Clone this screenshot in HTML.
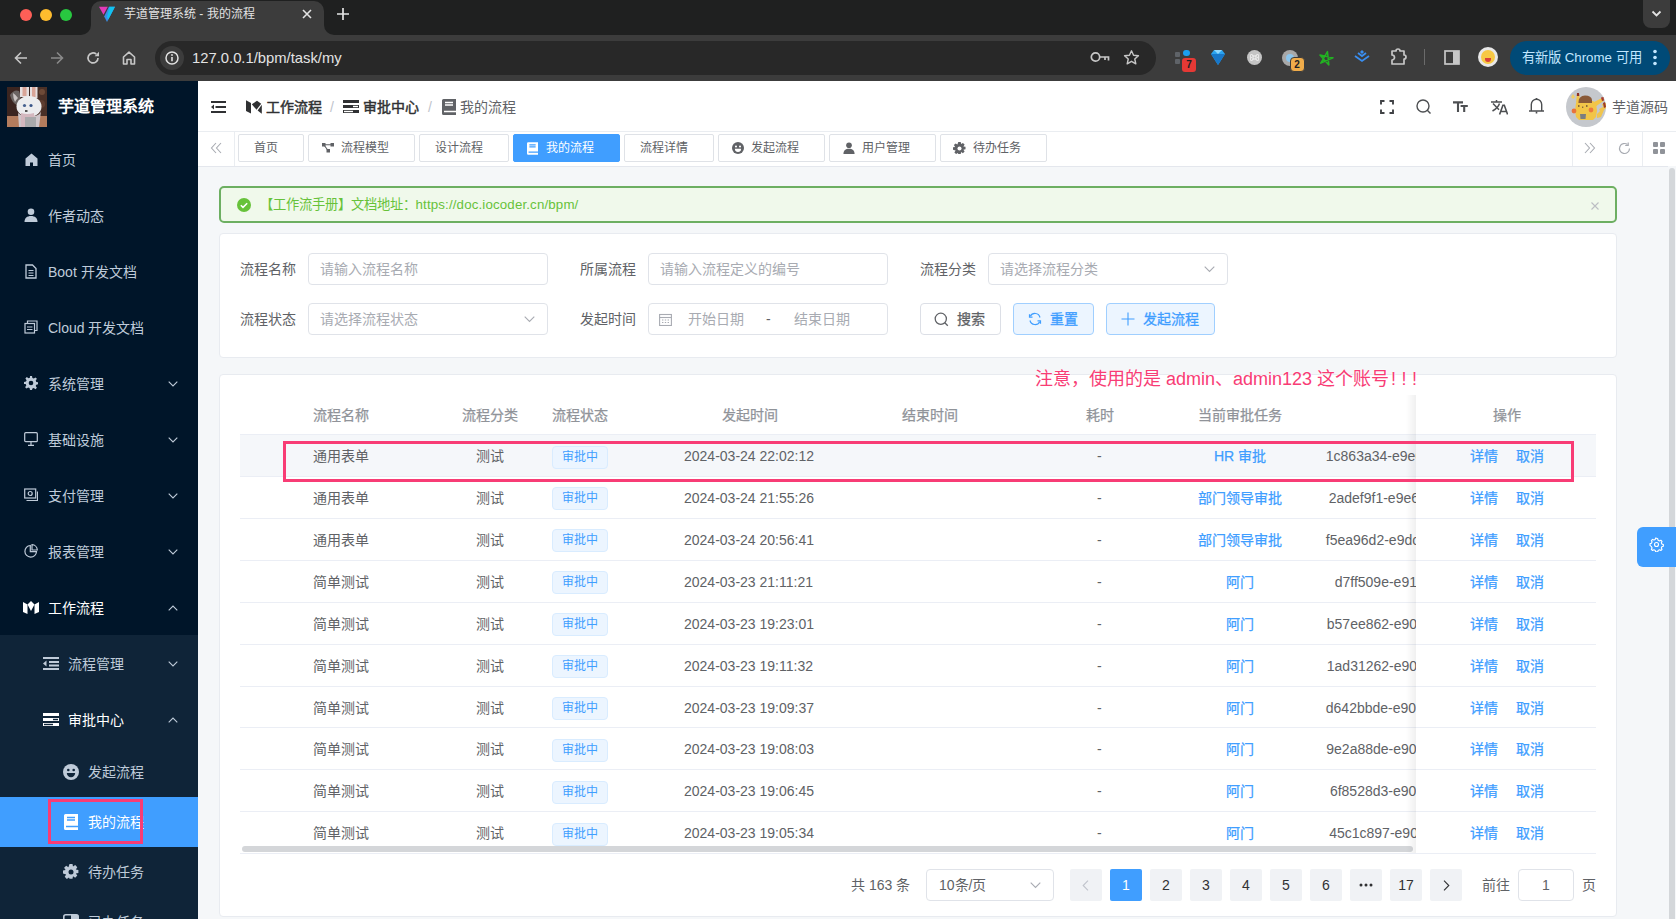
<!DOCTYPE html>
<html lang="zh-CN"><head><meta charset="utf-8">
<style>
*{box-sizing:border-box;margin:0;padding:0}
html,body{width:1676px;height:919px;overflow:hidden;font-family:"Liberation Sans",sans-serif;background:#f5f7f9}
.a{position:absolute}
svg{display:block}
/* browser chrome */
#tabbar{left:0;top:0;width:1676px;height:35px;background:#1f2020}
#toolbar{left:0;top:35px;width:1676px;height:46px;background:#3c3c3c}
/* sidebar */
#side{left:0;top:81px;width:198px;height:838px;background:#001529;overflow:hidden}
.mi{position:absolute;left:0;width:198px;height:56px;color:#bfcbd9;font-size:14px;line-height:56px}
.mi .t{position:absolute;left:48px;top:0.5px}
.mi .ic{position:absolute;top:20px}
.sub{background:#0f2438}
.chev{position:absolute;left:168px;top:26px}
/* header */
#hdr{left:198px;top:81px;width:1478px;height:50px;background:#fff}
#tags{left:198px;top:131px;width:1478px;height:36px;background:#fff;border-top:1px solid #eaedf1;border-bottom:1px solid #e4e7ed}
.tag{position:absolute;top:2px;height:28px;border:1px solid #dfe2e7;border-radius:2px;font-size:12px;color:#606266;line-height:26px;background:#fff}
.tag .t{position:absolute;top:0}
.card{position:absolute;left:219px;width:1398px;background:#fff;border:1px solid #e8ebf0;border-radius:4px}
.lbl{position:absolute;font-size:14px;color:#606266;line-height:32px;height:32px}
.inp{position:absolute;height:32px;border:1px solid #e0e3e9;border-radius:4px;background:#fff;font-size:14px;color:#a8abb2;line-height:30px}
.btn{position:absolute;height:32px;border-radius:4px;font-size:14px;line-height:30px;-webkit-text-stroke:0.3px currentColor}
.th{position:absolute;top:0;font-size:14px;color:#909399;line-height:40px;white-space:nowrap;-webkit-text-stroke:0.25px #909399}
.row{position:absolute;left:0;width:1356px;height:41.92px;border-bottom:1px solid #ebeef5}
.c{position:absolute;top:0;font-size:14px;color:#606266;line-height:42px;white-space:nowrap}
.stag{position:absolute;left:312px;top:10.5px;width:56px;height:23px;background:#ecf5ff;border:1px solid #d9ecff;border-radius:4px;color:#409eff;font-size:12px;line-height:21px;text-align:center}
.lnk{color:#409eff;-webkit-text-stroke:0.25px #409eff}
.med{-webkit-text-stroke:0.3px currentColor}
.pg{position:absolute;top:869px;width:32px;height:32px;background:#f0f2f5;border-radius:2px;font-size:14px;color:#303133;line-height:32px;text-align:center;font-weight:500}
</style></head><body>

<!-- ============ BROWSER CHROME ============ -->
<div id="tabbar" class="a"></div>
<div class="a" style="left:91px;top:1px;width:233px;height:34px;background:#3c3c3c;border-radius:10px 10px 0 0"></div>
<div class="a" style="left:81px;top:25px;width:10px;height:10px;background:#3c3c3c"></div>
<div class="a" style="left:71px;top:15px;width:20px;height:20px;background:#1f2020;border-radius:0 0 10px 0"></div>
<div class="a" style="left:324px;top:25px;width:10px;height:10px;background:#3c3c3c"></div>
<div class="a" style="left:324px;top:15px;width:20px;height:20px;background:#1f2020;border-radius:0 0 0 10px"></div>
<!-- traffic lights -->
<div class="a" style="left:20px;top:9px;width:12px;height:12px;border-radius:6px;background:#fe5f57"></div>
<div class="a" style="left:40px;top:9px;width:12px;height:12px;border-radius:6px;background:#febc2e"></div>
<div class="a" style="left:60px;top:9px;width:12px;height:12px;border-radius:6px;background:#28c840"></div>
<!-- favicon -->
<svg class="a" style="left:99px;top:6px" width="17" height="17" viewBox="0 0 17 17"><path d="M0 0.8h8.8L4.5 8.8z" fill="#e23bb8"/><path d="M9.9 0.8H16L8 16 5.2 10.5z" fill="#3a8ee8"/><path d="M10.5 0.8H16L9.3 13.5 8 11z" fill="#12c2f0"/></svg>
<div class="a" style="left:124px;top:6px;font-size:12px;color:#e3e3e3;line-height:16px;white-space:nowrap">芋道管理系统 - 我的流程</div>
<svg class="a" style="left:302px;top:9px" width="10" height="10" viewBox="0 0 10 10"><path d="M1 1l8 8M9 1l-8 8" stroke="#e3e3e3" stroke-width="1.6"/></svg>
<svg class="a" style="left:337px;top:8px" width="12" height="12" viewBox="0 0 12 12"><path d="M6 0v12M0 6h12" stroke="#e3e3e3" stroke-width="1.7"/></svg>
<div class="a" style="left:1643px;top:0;width:27px;height:28px;background:#3c3c3c;border-radius:0 0 8px 8px"></div>
<svg class="a" style="left:1651px;top:10px" width="11" height="8" viewBox="0 0 11 8"><path d="M1.5 1.5l4 4 4-4" stroke="#e3e3e3" stroke-width="1.8" fill="none"/></svg>

<div id="toolbar" class="a"></div>
<!-- nav icons -->
<svg class="a" style="left:14px;top:51px" width="14" height="14" viewBox="0 0 14 14"><path d="M13 7H2M7 1.5L1.5 7 7 12.5" stroke="#c7c7c7" stroke-width="1.6" fill="none"/></svg>
<svg class="a" style="left:50px;top:51px" width="14" height="14" viewBox="0 0 14 14"><path d="M1 7h11M7 1.5L12.5 7 7 12.5" stroke="#8a8a8a" stroke-width="1.6" fill="none"/></svg>
<svg class="a" style="left:86px;top:51px" width="14" height="14" viewBox="0 0 14 14"><path d="M12 7A5 5 0 1 1 10.3 3.2" stroke="#c7c7c7" stroke-width="1.7" fill="none"/><path d="M13 0.8v4.4H8.6z" fill="#c7c7c7"/></svg>
<svg class="a" style="left:122px;top:51px" width="14" height="14" viewBox="0 0 14 14"><path d="M1.5 13V6L7 1.2 12.5 6V13H9V8.5H5V13z" stroke="#c7c7c7" stroke-width="1.6" fill="none" stroke-linejoin="round"/></svg>
<div class="a" style="left:155px;top:41px;width:1001px;height:34px;background:#282828;border-radius:17px"></div>
<div class="a" style="left:160px;top:46px;width:24px;height:24px;background:#3c3c3c;border-radius:12px"></div>
<svg class="a" style="left:165px;top:51px" width="14" height="14" viewBox="0 0 14 14"><circle cx="7" cy="7" r="6" stroke="#e3e3e3" stroke-width="1.5" fill="none"/><path d="M7 6v4.2" stroke="#e3e3e3" stroke-width="1.6"/><circle cx="7" cy="4" r="0.9" fill="#e3e3e3"/></svg>
<div class="a" style="left:192px;top:49px;font-size:14.8px;color:#e3e3e3;line-height:18px;white-space:nowrap">127.0.0.1/bpm/task/my</div>
<svg class="a" style="left:1090px;top:51px" width="20" height="12" viewBox="0 0 20 12"><circle cx="5.5" cy="6" r="4.2" stroke="#c7c7c7" stroke-width="1.7" fill="none"/><path d="M9.7 6H18.5V9.5M15 6v3" stroke="#c7c7c7" stroke-width="1.7" fill="none"/></svg>
<svg class="a" style="left:1123px;top:49px" width="17" height="17" viewBox="0 0 24 24"><path d="M12 2.5l2.9 6.3 6.9.7-5.2 4.6 1.5 6.8L12 17.4 5.9 20.9l1.5-6.8L2.2 9.5l6.9-.7z" stroke="#c7c7c7" stroke-width="2" fill="none" stroke-linejoin="round"/></svg>
<!-- extensions -->
<div class="a" style="left:1175px;top:52px;width:5px;height:5px;background:#5f6368;border-radius:1px"></div>
<div class="a" style="left:1175px;top:59px;width:5px;height:5px;background:#5f6368;border-radius:1px"></div>
<div class="a" style="left:1183px;top:50px;width:7px;height:6px;background:#1a9ff0;border-radius:3px"></div>
<div class="a" style="left:1182px;top:58px;width:14px;height:14px;background:#e53935;border-radius:3px;color:#202124;font-size:10px;font-weight:bold;text-align:center;line-height:14px">7</div>
<svg class="a" style="left:1211px;top:50px" width="14" height="15" viewBox="0 0 14 15"><path d="M0 4L3 0h8l3 4-7 11z" fill="#2ba4f0"/><path d="M0 4h14L7 15z" fill="#1877c9"/><path d="M3 0l4 4 4-4" fill="#8fd8ff"/></svg>
<div class="a" style="left:1247px;top:50px;width:15px;height:15px;background:#c4c4c4;border-radius:8px"></div>
<svg class="a" style="left:1250px;top:53px" width="9" height="9" viewBox="0 0 9 9"><path d="M3 3h3v3H3zM3 3a1.5 1.5 0 1 0-1.5 1.5M6 3a1.5 1.5 0 1 1 1.5 1.5M3 6a1.5 1.5 0 1 1-1.5-1.5M6 6a1.5 1.5 0 1 0 1.5-1.5" stroke="#f4f4f4" stroke-width="1" fill="none"/></svg>
<div class="a" style="left:1282px;top:50px;width:16px;height:16px;background:#a8a8a8;border-radius:8px"></div>
<div class="a" style="left:1286px;top:54px;width:8px;height:8px;background:#8cc6ee;border-radius:4px"></div>
<div class="a" style="left:1289.5px;top:57px;width:15px;height:15px;background:#f0ac4a;border:1px solid #3c3c3c;border-radius:4px;color:#202124;font-size:10px;font-weight:700;font-family:'Liberation Sans',sans-serif;text-align:center;line-height:13px">2</div>
<svg class="a" style="left:1318px;top:50px" width="16" height="16" viewBox="0 0 16 16"><path d="M9.46 1.65 L10.85 14.89 L1.94 5.00 L14.96 7.77 L2.80 13.18Z" stroke="#22b322" stroke-width="1.5" fill="none" stroke-linejoin="round"/></svg>
<svg class="a" style="left:1354px;top:50px" width="16" height="14" viewBox="0 0 16 14"><path d="M1 6l7 5 7-5M4 3l4 3 4-3" stroke="#3a8ef0" stroke-width="1.8" fill="none"/><path d="M8 0l2 2-2 2-2-2z" fill="#3a8ef0"/></svg>
<svg class="a" style="left:1390px;top:48px" width="18" height="17" viewBox="0 0 18 17"><path d="M2 3h4a2 2 0 0 1 4 0h4v4a2 2 0 0 1 0 4v5H2v-4a2 2 0 0 0 0-5z" stroke="#c7c7c7" stroke-width="1.7" fill="none" stroke-linejoin="round"/></svg>
<div class="a" style="left:1424px;top:49px;width:1px;height:16px;background:#6b6b6b"></div>
<svg class="a" style="left:1444px;top:50px" width="16" height="15" viewBox="0 0 16 15"><rect x="1" y="1" width="14" height="13" stroke="#c7c7c7" stroke-width="1.7" fill="none"/><rect x="9" y="1" width="6" height="13" fill="#c7c7c7"/></svg>
<div class="a" style="left:1478px;top:47px;width:20px;height:20px;background:#e8e8e8;border-radius:10px"></div>
<div class="a" style="left:1481px;top:50px;width:14px;height:14px;background:#f7c844;border-radius:7px"></div>
<div class="a" style="left:1485px;top:58px;width:6px;height:4px;background:#d8403a;border-radius:0 0 3px 3px"></div>
<div class="a" style="left:1510px;top:41px;width:160px;height:34px;background:#004a77;border-radius:17px"></div>
<div class="a" style="left:1522px;top:49px;font-size:13.3px;color:#c2e7ff;line-height:18px;white-space:nowrap">有新版 Chrome 可用</div>
<svg class="a" style="left:1652px;top:49px" width="6" height="17" viewBox="0 0 6 17"><circle cx="3" cy="2.5" r="1.8" fill="#c2e7ff"/><circle cx="3" cy="8.5" r="1.8" fill="#c2e7ff"/><circle cx="3" cy="14.5" r="1.8" fill="#c2e7ff"/></svg>

<!-- ============ SIDEBAR ============ -->
<div id="side" class="a">
  <!-- logo -->
  <svg class="a" style="left:7px;top:6px" width="40" height="40" viewBox="0 0 40 40">
    <rect width="40" height="40" fill="#3b2520"/>
    <rect x="28" y="0" width="12" height="29" fill="#4a3027"/>
    <circle cx="35" cy="5" r="3" fill="#6e4a38"/><circle cx="34" cy="17" r="4" fill="#5e3d30"/>
    <rect y="29" width="40" height="11" fill="#b37c5d"/>
    <path d="M3 8q4-6 9-4l2 6-4 8q-5-2-7-10z" fill="#6b6462"/>
    <path d="M6 6q3 2 5 5-2 2-3 4-2-4-2-9z" fill="#c9c3c2"/>
    <path d="M13 0h9v10h-9z" fill="#e6dfe0"/><path d="M15.5 0h4v9h-4z" fill="#d9a497"/>
    <path d="M23 0h7.5v11H23z" fill="#e6dfe0"/><path d="M25 0h3.5v10H25z" fill="#d9a497"/>
    <ellipse cx="22" cy="19.5" rx="12.5" ry="10.5" fill="#ececee"/>
    <path d="M11 26q3 3 7 3h10q5-1 6-5l-2 16H12z" fill="#cfc6ca"/>
    <path d="M14 26q6 2 13 0l1 14H14z" fill="#d4b8bf"/>
    <path d="M18 30h11v10H18z" fill="#a9a9ab"/>
    <circle cx="17.5" cy="18.5" r="1.6" fill="#46618f"/><circle cx="24" cy="18.5" r="1.6" fill="#3a5688"/>
    <rect x="18" y="23" width="2.5" height="2" fill="#555"/>
  </svg>
  <div class="a" style="left:58px;top:17px;font-size:16px;color:#fff;font-weight:bold;line-height:18px;white-space:nowrap">芋道管理系统</div>

  <div class="mi" style="top:50px"><svg class="ic" style="left:25px;top:22px" width="13" height="13" viewBox="0 0 13 13"><path d="M6.5 0.5L0.5 5.5V13H5V9.5h3V13h4.5V5.5z" fill="#bfcbd9"/></svg><span class="t">首页</span></div>
  <div class="mi" style="top:106px"><svg class="ic" style="left:24px;top:21px" width="14" height="14" viewBox="0 0 14 14"><circle cx="7" cy="3.8" r="3.3" fill="#bfcbd9"/><path d="M0.5 14c0-4 2.5-6 6.5-6s6.5 2 6.5 6z" fill="#bfcbd9"/></svg><span class="t">作者动态</span></div>
  <div class="mi" style="top:162px"><svg class="ic" style="left:25px;top:21px" width="12" height="15" viewBox="0 0 12 15"><path d="M1 1h6.5L11 4.5V14H1z" stroke="#bfcbd9" stroke-width="1.3" fill="none"/><path d="M3.5 6.5h5M3.5 9h5M3.5 11.5h5" stroke="#bfcbd9" stroke-width="1.1"/></svg><span class="t">Boot 开发文档</span></div>
  <div class="mi" style="top:218px"><svg class="ic" style="left:24px;top:21px" width="14" height="14" viewBox="0 0 14 14"><path d="M3.5 3.5V1h9.5v9.5h-2.5" stroke="#bfcbd9" stroke-width="1.2" fill="none"/><rect x="1" y="3.5" width="9.5" height="9.5" stroke="#bfcbd9" stroke-width="1.2" fill="none"/><path d="M3 7h5.5M3 9.5h5.5" stroke="#bfcbd9" stroke-width="1.1"/></svg><span class="t">Cloud 开发文档</span></div>
  <div class="mi" style="top:274px"><svg class="ic" style="left:24px;top:21px" width="14" height="14" viewBox="0 0 14 14"><path d="M6 0h2l.4 2 1.4.6 1.7-1.2 1.4 1.4-1.2 1.7.6 1.4 2 .4v2l-2 .4-.6 1.4 1.2 1.7-1.4 1.4-1.7-1.2-1.4.6L8 14H6l-.4-2-1.4-.6-1.7 1.2-1.4-1.4 1.2-1.7-.6-1.4L0 8V6l2-.4.6-1.4-1.2-1.7 1.4-1.4 1.7 1.2 1.4-.6z" fill="#bfcbd9"/><circle cx="7" cy="7" r="2.3" fill="#001529"/></svg><span class="t">系统管理</span><svg class="chev" width="10" height="6" viewBox="0 0 10 6"><path d="M0.7 0.7L5 5 9.3 0.7" stroke="#bfcbd9" stroke-width="1.1" fill="none"/></svg></div>
  <div class="mi" style="top:330px"><svg class="ic" style="left:24px;top:21px" width="14" height="14" viewBox="0 0 14 14"><rect x="0.7" y="0.7" width="12.6" height="9" rx="1" stroke="#bfcbd9" stroke-width="1.2" fill="none"/><path d="M7 9.7v3.3M4 13.3h6" stroke="#bfcbd9" stroke-width="1.2"/></svg><span class="t">基础设施</span><svg class="chev" width="10" height="6" viewBox="0 0 10 6"><path d="M0.7 0.7L5 5 9.3 0.7" stroke="#bfcbd9" stroke-width="1.1" fill="none"/></svg></div>
  <div class="mi" style="top:386px"><svg class="ic" style="left:24px;top:21px" width="14" height="14" viewBox="0 0 14 14"><rect x="0.7" y="1" width="11" height="9" stroke="#bfcbd9" stroke-width="1.2" fill="none"/><path d="M2.5 12.5h11V3.5" stroke="#bfcbd9" stroke-width="1.2" fill="none"/><circle cx="6.2" cy="5.5" r="2" stroke="#bfcbd9" stroke-width="1.2" fill="none"/></svg><span class="t">支付管理</span><svg class="chev" width="10" height="6" viewBox="0 0 10 6"><path d="M0.7 0.7L5 5 9.3 0.7" stroke="#bfcbd9" stroke-width="1.1" fill="none"/></svg></div>
  <div class="mi" style="top:442px"><svg class="ic" style="left:24px;top:21px" width="14" height="14" viewBox="0 0 14 14"><path d="M6.3 1.5A5.8 5.8 0 1 0 12.5 7.7H6.3z" stroke="#bfcbd9" stroke-width="1.2" fill="none"/><path d="M8 0.7A5.5 5.5 0 0 1 13.3 6H8z" stroke="#bfcbd9" stroke-width="1.2" fill="none"/></svg><span class="t">报表管理</span><svg class="chev" width="10" height="6" viewBox="0 0 10 6"><path d="M0.7 0.7L5 5 9.3 0.7" stroke="#bfcbd9" stroke-width="1.1" fill="none"/></svg></div>
  <div class="mi" style="top:498px;color:#fff"><svg class="ic" style="left:23px;top:22px" width="16" height="13" viewBox="0 0 16 13"><path d="M0 1l4.5 2.5V13L0 11z" fill="#fff"/><path d="M4.5 3.5L8 0l3.5 3.5L8 10z" fill="#fff"/><path d="M11.5 3.5L16 1v10l-4.5 2z" fill="#fff"/></svg><span class="t">工作流程</span><svg class="chev" width="10" height="6" viewBox="0 0 10 6"><path d="M0.7 5.3L5 1 9.3 5.3" stroke="#bfcbd9" stroke-width="1.1" fill="none"/></svg></div>
  <div class="a sub" style="left:0;top:554px;width:198px;height:290px"></div>
  <div class="mi" style="top:554px"><svg class="ic" style="left:43px;top:22px" width="16" height="13" viewBox="0 0 16 13"><path d="M0 1h16M6 5h10M6 8.5h10M0 12h16" stroke="#bfcbd9" stroke-width="2.2"/><path d="M0 6.5L3.5 3.5v6z" fill="#bfcbd9"/></svg><span class="t" style="left:68px">流程管理</span><svg class="chev" width="10" height="6" viewBox="0 0 10 6"><path d="M0.7 0.7L5 5 9.3 0.7" stroke="#bfcbd9" stroke-width="1.1" fill="none"/></svg></div>
  <div class="mi" style="top:610px;color:#fff"><svg class="ic" style="left:43px;top:22px" width="16" height="13" viewBox="0 0 16 13"><rect x="0" y="0" width="16" height="3" fill="#fff"/><rect x="0" y="5" width="16" height="3" fill="#fff"/><rect x="0" y="10" width="16" height="3" fill="#fff"/><rect x="10" y="5.8" width="5" height="1.4" fill="#0f2438"/><rect x="1" y="10.8" width="9" height="1.4" fill="#0f2438"/></svg><span class="t" style="left:68px">审批中心</span><svg class="chev" width="10" height="6" viewBox="0 0 10 6"><path d="M0.7 5.3L5 1 9.3 5.3" stroke="#bfcbd9" stroke-width="1.1" fill="none"/></svg></div>
  <div class="mi" style="top:666px;height:50px;line-height:50px"><svg class="ic" style="left:63px;top:17px" width="16" height="16" viewBox="0 0 16 16"><circle cx="8" cy="8" r="8" fill="#bfcbd9"/><circle cx="5.3" cy="6" r="1.3" fill="#0f2438"/><circle cx="10.7" cy="6" r="1.3" fill="#0f2438"/><path d="M3.8 9h8.4a4.2 4.2 0 0 1-8.4 0z" fill="#0f2438"/></svg><span class="t" style="left:88px;top:-0.5px">发起流程</span></div>
  <div class="mi" style="top:716px;height:50px;line-height:50px;background:#409eff;color:#fff"><svg class="ic" style="left:64px;top:17px" width="14" height="16" viewBox="0 0 14 16"><path d="M1.5 0H14v16H1.5A1.5 1.5 0 0 1 0 14.5v-13A1.5 1.5 0 0 1 1.5 0z" fill="#fff"/><path d="M3 3.5h8M3 6h8M2 12.5h12" stroke="#409eff" stroke-width="1.4"/></svg><span class="t" style="left:88px;top:-0.5px">我的流程</span></div>
  <div class="mi" style="top:766px;height:50px;line-height:50px"><svg class="ic" style="left:63px;top:17px" width="16" height="16" viewBox="0 0 16 16"><path d="M6.5 0h3l.5 2.6 2.2-1.5 2.1 2.1-1.5 2.2 2.6.5v3l-2.6.5 1.5 2.2-2.1 2.1-2.2-1.5-.5 2.6h-3L6 13.4l-2.2 1.5-2.1-2.1 1.5-2.2L0 9.5v-3l2.6-.5-1.5-2.2 2.1-2.1L5.4 3.2z" fill="#bfcbd9"/><circle cx="8" cy="8" r="2.5" fill="#0f2438"/></svg><span class="t" style="left:88px;top:-0.5px">待办任务</span></div>
  <div class="mi" style="top:816px;height:50px;line-height:50px"><svg class="ic" style="left:63px;top:17px" width="16" height="16" viewBox="0 0 16 16"><rect x="0.8" y="0.8" width="14.4" height="14.4" rx="2" stroke="#bfcbd9" stroke-width="1.6" fill="none"/><rect x="8" y="0.8" width="7.2" height="14.4" fill="#bfcbd9"/></svg><span class="t" style="left:88px;top:-0.5px">已办任务</span></div>
  <!-- annotation box -->
  <div class="a" style="left:48px;top:718px;width:95px;height:45px;border:3px solid #f83c75"></div>
</div>

<!-- ============ HEADER ============ -->
<div id="hdr" class="a"></div>
<!-- hamburger -->
<svg class="a" style="left:211px;top:101px" width="15" height="12" viewBox="0 0 15 12"><path d="M0 1h15M4.5 6H15M0 11h15" stroke="#303133" stroke-width="1.8"/><path d="M0 6L3 3.6v4.8z" fill="#303133"/></svg>
<!-- M logo -->
<svg class="a" style="left:246px;top:99.5px" width="16" height="14" viewBox="0 0 16 14"><path d="M0 0.3L5 3V13.6L0 11z" fill="#303133"/><path d="M5.8 4.2L11 0.8 15.2 3.8 10.5 9.8z" fill="#303133"/><path d="M11.6 10.6L15.8 4.8V13.8z" fill="#303133"/></svg>
<div class="a" style="left:266px;top:98px;font-size:14px;color:#303133;-webkit-text-stroke:0.45px #303133;line-height:18px;white-space:nowrap">工作流程</div>
<div class="a" style="left:330px;top:98px;font-size:14px;color:#c0c4cc;line-height:18px">/</div>
<svg class="a" style="left:343px;top:100px" width="16" height="13" viewBox="0 0 16 13"><rect x="0" y="0" width="16" height="3" fill="#303133"/><rect x="0" y="5" width="16" height="3" fill="#303133"/><rect x="0" y="10" width="16" height="3" fill="#303133"/><rect x="10" y="5.8" width="5" height="1.4" fill="#fff"/><rect x="1" y="10.8" width="9" height="1.4" fill="#fff"/></svg>
<div class="a" style="left:363px;top:98px;font-size:14px;color:#303133;-webkit-text-stroke:0.45px #303133;line-height:18px;white-space:nowrap">审批中心</div>
<div class="a" style="left:428px;top:98px;font-size:14px;color:#c0c4cc;line-height:18px">/</div>
<svg class="a" style="left:442px;top:99px" width="14" height="16" viewBox="0 0 14 16"><path d="M1.5 0H14v16H1.5A1.5 1.5 0 0 1 0 14.5v-13A1.5 1.5 0 0 1 1.5 0z" fill="#606266"/><path d="M3 3.5h8M3 6h8M2 12.5h12" stroke="#fff" stroke-width="1.4"/></svg>
<div class="a" style="left:460px;top:98px;font-size:14px;color:#606266;line-height:18px;white-space:nowrap">我的流程</div>
<!-- right tools -->
<svg class="a" style="left:1380px;top:100px" width="14" height="14" viewBox="0 0 14 14"><path d="M1 4.5V1h3.5M9.5 1H13v3.5M13 9.5V13H9.5M4.5 13H1V9.5" stroke="#404245" stroke-width="1.9" fill="none"/></svg>
<svg class="a" style="left:1416px;top:99px" width="16" height="16" viewBox="0 0 16 16"><circle cx="7" cy="7" r="6" stroke="#4d4f52" stroke-width="1.4" fill="none"/><path d="M11.3 11.3L14.5 14.5" stroke="#4d4f52" stroke-width="1.4"/></svg>
<svg class="a" style="left:1452px;top:100px" width="17" height="14" viewBox="0 0 17 14"><path d="M1 2.4h10M6 2.4V12M8.6 6h7.2M12.2 6v6" stroke="#4d4f52" stroke-width="2.1"/></svg>
<svg class="a" style="left:1490px;top:98px" width="18" height="18" viewBox="0 0 18 18"><path d="M1 4h11M6.5 2v2M3 5.5l6 6.2M9.5 5.5c-1 3-3.5 5.5-7 7.5" stroke="#4d4f52" stroke-width="1.5" fill="none"/><path d="M9.6 16.5l3.3-9.2h1.4l3.3 9.2M11 13.5h5" stroke="#4d4f52" stroke-width="1.6" fill="none"/></svg>
<svg class="a" style="left:1528px;top:97px" width="17" height="18" viewBox="0 0 17 18"><path d="M3.3 13.8V7.5a5.2 5.2 0 0 1 10.4 0v6.3M1 14h15" stroke="#4d4f52" stroke-width="1.4" fill="none"/><path d="M8.5 2.3V1M8.5 14.5v2" stroke="#4d4f52" stroke-width="1.6"/></svg>
<!-- avatar -->
<svg class="a" style="left:1566px;top:87px" width="40" height="40" viewBox="0 0 40 40">
  <circle cx="20" cy="20" r="20" fill="#c5c8cd"/>
  <path d="M31 27l3-3-1-2 4-2-1-3 4-1v5l-2 2-3 7-4 1z" fill="#f0c54e"/>
  <path d="M37 16l2-1 1 5-2 1z" fill="#9a3a2a"/>
  <path d="M10 16l3-2h14l3 2 1 8-1 6-3 3H13l-3-3-1-6z" fill="#f2c548"/>
  <path d="M10 16l1-10h2l1 8z" fill="#f2c548"/>
  <path d="M11 6h2l.3 3h-2.5z" fill="#8e2f24"/>
  <path d="M26 16l10-5 1.5 3-8.5 6z" fill="#f2c548"/>
  <path d="M35 10.5l2.5-.5.5 3.5-2 .5z" fill="#a63a2a"/>
  <path d="M12.5 15q0-6 6.5-6.5 6.5 0 7 4.5v3h-13.5z" fill="#8a5a38"/>
  <circle cx="8" cy="24" r="2.4" fill="#e8743c"/>
  <circle cx="25" cy="23" r="2.4" fill="#ec7a3e"/>
  <rect x="12" y="18" width="1.5" height="2" fill="#8a6a3a"/><rect x="20" y="18" width="1.5" height="2" fill="#8a6a3a"/><rect x="16" y="19.5" width="1.3" height="1.5" fill="#8a6a3a"/>
  <path d="M14 27h6l-.5 5h-5z" fill="#7c7d80"/>
  <path d="M5 10l2-3 2 3-2 2z" fill="#f2cf63"/>
</svg>
<div class="a" style="left:1612px;top:98px;font-size:14px;color:#606266;line-height:18px;white-space:nowrap">芋道源码</div>


<div id="tags" class="a"></div>
<!-- tags view -->
<svg class="a" style="left:210px;top:142px" width="12" height="12" viewBox="0 0 12 12"><path d="M6 1L1.5 6 6 11M11 1L6.5 6 11 11" stroke="#a8abb2" stroke-width="1.1" fill="none"/></svg>
<div class="a" style="left:234px;top:132px;width:1px;height:34px;background:#eaedf1"></div>
<div class="tag a" style="left:238px;top:134px;width:66px"><span class="t" style="left:15px">首页</span></div>
<div class="tag a" style="left:308px;top:134px;width:107px"><svg class="a" style="left:13px;top:8px" width="12" height="10" viewBox="0 0 12 10"><rect x="0" y="0" width="3.5" height="3.5" fill="#606266"/><rect x="8.5" y="0" width="3.5" height="3.5" fill="#606266"/><rect x="4.5" y="6" width="3.5" height="3.5" fill="#606266"/><path d="M2 2l4 5.5M3 1.75h6" stroke="#606266" stroke-width="1.1"/></svg><span class="t" style="left:32px">流程模型</span></div>
<div class="tag a" style="left:419px;top:134px;width:90px"><span class="t" style="left:15px">设计流程</span></div>
<div class="tag a" style="left:513px;top:134px;width:107px;background:#409eff;border-color:#409eff;color:#fff"><svg class="a" style="left:13px;top:7px" width="11" height="13" viewBox="0 0 14 16"><path d="M1.5 0H14v16H1.5A1.5 1.5 0 0 1 0 14.5v-13A1.5 1.5 0 0 1 1.5 0z" fill="#fff"/><path d="M3 3.5h8M3 6h8M2 12.5h12" stroke="#409eff" stroke-width="1.6"/></svg><span class="t" style="left:32px">我的流程</span></div>
<div class="tag a" style="left:624px;top:134px;width:90px"><span class="t" style="left:15px">流程详情</span></div>
<div class="tag a" style="left:718px;top:134px;width:107px"><svg class="a" style="left:13px;top:7px" width="12" height="12" viewBox="0 0 16 16"><circle cx="8" cy="8" r="8" fill="#606266"/><circle cx="5.3" cy="6" r="1.4" fill="#fff"/><circle cx="10.7" cy="6" r="1.4" fill="#fff"/><path d="M3.8 9h8.4a4.2 4.2 0 0 1-8.4 0z" fill="#fff"/></svg><span class="t" style="left:32px">发起流程</span></div>
<div class="tag a" style="left:829px;top:134px;width:107px"><svg class="a" style="left:13px;top:7px" width="12" height="12" viewBox="0 0 14 14"><circle cx="7" cy="3.8" r="3.3" fill="#606266"/><path d="M0.5 14c0-4 2.5-6 6.5-6s6.5 2 6.5 6z" fill="#606266"/></svg><span class="t" style="left:32px">用户管理</span></div>
<div class="tag a" style="left:940px;top:134px;width:107px"><svg class="a" style="left:12px;top:7px" width="13" height="13" viewBox="0 0 16 16"><path d="M6.5 0h3l.5 2.6 2.2-1.5 2.1 2.1-1.5 2.2 2.6.5v3l-2.6.5 1.5 2.2-2.1 2.1-2.2-1.5-.5 2.6h-3L6 13.4l-2.2 1.5-2.1-2.1 1.5-2.2L0 9.5v-3l2.6-.5-1.5-2.2 2.1-2.1L5.4 3.2z" fill="#606266"/><circle cx="8" cy="8" r="2.5" fill="#fff"/></svg><span class="t" style="left:32px">待办任务</span></div>
<div class="a" style="left:1572px;top:132px;width:1px;height:34px;background:#eaedf1"></div>
<div class="a" style="left:1607px;top:132px;width:1px;height:34px;background:#eaedf1"></div>
<div class="a" style="left:1642px;top:132px;width:1px;height:34px;background:#eaedf1"></div>
<svg class="a" style="left:1584px;top:142px" width="12" height="12" viewBox="0 0 12 12"><path d="M6 1l4.5 5L6 11M1 1l4.5 5L1 11" stroke="#a8abb2" stroke-width="1.1" fill="none"/></svg>
<svg class="a" style="left:1618px;top:142px" width="13" height="13" viewBox="0 0 13 13"><path d="M11.5 6.5A5 5 0 1 1 9.5 2.5" stroke="#a8abb2" stroke-width="1.2" fill="none"/><path d="M10.2 0.5v3h-3" stroke="#a8abb2" stroke-width="1.2" fill="none"/></svg>
<svg class="a" style="left:1653px;top:142px" width="12" height="12" viewBox="0 0 12 12"><rect x="0" y="0" width="5" height="5" rx="1" fill="#909399"/><rect x="7" y="0" width="5" height="5" rx="1" fill="#909399"/><rect x="0" y="7" width="5" height="5" rx="1" fill="#909399"/><rect x="7" y="7" width="5" height="5" rx="1" fill="#909399"/></svg>


<!-- ============ CONTENT ============ -->
<!-- page scrollbar -->
<div class="a" style="left:1668px;top:166px;width:8px;height:753px;background:#f5f7f9"></div>
<div class="a" style="left:1669px;top:168px;width:6px;height:751px;background:#d4d7da;border-radius:3px 3px 0 0"></div>
<!-- alert -->
<div class="a" style="left:219px;top:186px;width:1398px;height:37px;background:#f0f9eb;border:2px solid #6daf62;border-radius:5px"></div>
<svg class="a" style="left:237px;top:198px" width="14" height="14" viewBox="0 0 14 14"><circle cx="7" cy="7" r="7" fill="#67c23a"/><path d="M3.8 7.2l2.2 2.2 4.2-4.2" stroke="#fff" stroke-width="1.5" fill="none"/></svg>
<div class="a" style="left:259.5px;top:196px;font-size:13.3px;color:#67c23a;line-height:17px;white-space:nowrap">【工作流手册】文档地址：<span style="letter-spacing:0.15px">https://doc.iocoder.cn/bpm/</span></div>
<svg class="a" style="left:1591px;top:202px" width="8" height="8" viewBox="0 0 8 8"><path d="M0.5 0.5l7 7M7.5 0.5l-7 7" stroke="#bcbec3" stroke-width="1.1"/></svg>

<!-- search card -->
<div class="card" style="top:233px;height:125px"></div>
<div class="lbl" style="left:240px;top:253px">流程名称</div>
<div class="inp" style="left:308px;top:253px;width:240px"><span class="a" style="left:11px;top:0">请输入流程名称</span></div>
<div class="lbl" style="left:580px;top:253px">所属流程</div>
<div class="inp" style="left:648px;top:253px;width:240px"><span class="a" style="left:11px;top:0">请输入流程定义的编号</span></div>
<div class="lbl" style="left:920px;top:253px">流程分类</div>
<div class="inp" style="left:988px;top:253px;width:240px"><span class="a" style="left:11px;top:0">请选择流程分类</span><svg class="a" style="left:215px;top:12px" width="11" height="7" viewBox="0 0 11 7"><path d="M0.7 0.7l4.8 4.8 4.8-4.8" stroke="#a8abb2" stroke-width="1.1" fill="none"/></svg></div>
<div class="lbl" style="left:240px;top:303px">流程状态</div>
<div class="inp" style="left:308px;top:303px;width:240px"><span class="a" style="left:11px;top:0">请选择流程状态</span><svg class="a" style="left:215px;top:12px" width="11" height="7" viewBox="0 0 11 7"><path d="M0.7 0.7l4.8 4.8 4.8-4.8" stroke="#a8abb2" stroke-width="1.1" fill="none"/></svg></div>
<div class="lbl" style="left:580px;top:303px">发起时间</div>
<div class="inp" style="left:648px;top:303px;width:240px"><svg class="a" style="left:10px;top:9px" width="13" height="13" viewBox="0 0 13 13"><rect x="0.6" y="1.5" width="11.8" height="11" stroke="#a8abb2" stroke-width="1.1" fill="none"/><path d="M0.6 4.5h11.8" stroke="#a8abb2" stroke-width="1.1"/><path d="M3 7h1.4M5.8 7h1.4M8.6 7h1.4M3 9.5h1.4M5.8 9.5h1.4M8.6 9.5h1.4" stroke="#a8abb2" stroke-width="1"/></svg><span class="a" style="left:39px;top:0">开始日期</span><span class="a" style="left:117px;top:0;color:#606266">-</span><span class="a" style="left:145px;top:0">结束日期</span></div>
<div class="btn a" style="left:920px;top:303px;width:81px;border:1px solid #dcdfe6;background:#fff;color:#606266"><svg class="a" style="left:13px;top:8px" width="15" height="15" viewBox="0 0 15 15"><circle cx="6.8" cy="6.8" r="5.6" stroke="#606266" stroke-width="1.3" fill="none"/><path d="M10.8 10.8l3 3" stroke="#606266" stroke-width="1.3"/></svg><span class="a" style="left:36px;top:0">搜索</span></div>
<div class="btn a" style="left:1013px;top:303px;width:81px;border:1px solid #a0cfff;background:#ecf5ff;color:#409eff"><svg class="a" style="left:14px;top:8px" width="14" height="14" viewBox="0 0 14 14"><path d="M12 5.5A5.2 5.2 0 0 0 2.3 4.3M2 8.5a5.2 5.2 0 0 0 9.7 1.2" stroke="#409eff" stroke-width="1.2" fill="none"/><path d="M1.5 2.2v3h3M12.5 11.8v-3h-3" stroke="#409eff" stroke-width="1.2" fill="none"/></svg><span class="a" style="left:36px;top:0">重置</span></div>
<div class="btn a" style="left:1106px;top:303px;width:109px;border:1px solid #a0cfff;background:#ecf5ff;color:#409eff"><svg class="a" style="left:14px;top:8px" width="14" height="14" viewBox="0 0 14 14"><path d="M7 0.5v13M0.5 7h13" stroke="#409eff" stroke-width="1.1"/></svg><span class="a" style="left:36px;top:0">发起流程</span></div>

<!-- table card -->
<div class="card" style="top:374px;height:543px"></div>
<div class="a" style="left:1035px;top:368px;font-size:18px;color:#f83c75;line-height:22px;white-space:nowrap;text-shadow:0 0 2px #fff,0 0 2px #fff">注意，使用的是 admin、admin123 这个账号<span style="margin-left:2px;letter-spacing:5.5px">!!!</span></div>

<div class="a" id="tbl" style="left:240px;top:395px;width:1356px;height:459px;overflow:hidden">
  <div class="a" style="left:0;top:0;width:1356px;height:40px;border-bottom:1px solid #ebeef5;background:#fff"></div>
  <div class="th" style="left:73px">流程名称</div>
  <div class="th" style="left:222px">流程分类</div>
  <div class="th" style="left:312px">流程状态</div>
  <div class="th" style="left:482px">发起时间</div>
  <div class="th" style="left:662px">结束时间</div>
  <div class="th" style="left:846px">耗时</div>
  <div class="th" style="left:958px">当前审批任务</div>
  <div class="row" style="top:40.00px;background:#f5f7fa"><div class="c" style="left:73px">通用表单</div><div class="c" style="left:236px">测试</div><div class="stag">审批中</div><div class="c" style="left:444px">2024-03-24 22:02:12</div><div class="c" style="left:857px">-</div><div class="c lnk" style="left:974px">HR 审批</div><div class="c" style="left:1085.8px">1c863a34-e9e6-11ee-8d1a-a2b8e1f1c5d0</div></div>
<div class="row" style="top:81.92px;background:#fff"><div class="c" style="left:73px">通用表单</div><div class="c" style="left:236px">测试</div><div class="stag">审批中</div><div class="c" style="left:444px">2024-03-24 21:55:26</div><div class="c" style="left:857px">-</div><div class="c lnk" style="left:958px">部门领导审批</div><div class="c" style="left:1088.7px">2adef9f1-e9e6-11ee-8d1a-a2b8e1f1c5d0</div></div>
<div class="row" style="top:123.84px;background:#fff"><div class="c" style="left:73px">通用表单</div><div class="c" style="left:236px">测试</div><div class="stag">审批中</div><div class="c" style="left:444px">2024-03-24 20:56:41</div><div class="c" style="left:857px">-</div><div class="c lnk" style="left:958px">部门领导审批</div><div class="c" style="left:1085.8px">f5ea96d2-e9dc-11ee-8d1a-a2b8e1f1c5d0</div></div>
<div class="row" style="top:165.76px;background:#fff"><div class="c" style="left:73px">简单测试</div><div class="c" style="left:236px">测试</div><div class="stag">审批中</div><div class="c" style="left:444px">2024-03-23 21:11:21</div><div class="c" style="left:857px">-</div><div class="c lnk" style="left:986px">阿门</div><div class="c" style="left:1094.7px">d7ff509e-e91c-11ee-8d1a-a2b8e1f1c5d0</div></div>
<div class="row" style="top:207.68px;background:#fff"><div class="c" style="left:73px">简单测试</div><div class="c" style="left:236px">测试</div><div class="stag">审批中</div><div class="c" style="left:444px">2024-03-23 19:23:01</div><div class="c" style="left:857px">-</div><div class="c lnk" style="left:986px">阿门</div><div class="c" style="left:1086.8px">b57ee862-e90c-11ee-8d1a-a2b8e1f1c5d0</div></div>
<div class="row" style="top:249.60px;background:#fff"><div class="c" style="left:73px">简单测试</div><div class="c" style="left:236px">测试</div><div class="stag">审批中</div><div class="c" style="left:444px">2024-03-23 19:11:32</div><div class="c" style="left:857px">-</div><div class="c lnk" style="left:986px">阿门</div><div class="c" style="left:1086.8px">1ad31262-e90b-11ee-8d1a-a2b8e1f1c5d0</div></div>
<div class="row" style="top:291.52px;background:#fff"><div class="c" style="left:73px">简单测试</div><div class="c" style="left:236px">测试</div><div class="stag">审批中</div><div class="c" style="left:444px">2024-03-23 19:09:37</div><div class="c" style="left:857px">-</div><div class="c lnk" style="left:986px">阿门</div><div class="c" style="left:1085.8px">d642bbde-e90a-11ee-8d1a-a2b8e1f1c5d0</div></div>
<div class="row" style="top:333.44px;background:#fff"><div class="c" style="left:73px">简单测试</div><div class="c" style="left:236px">测试</div><div class="stag">审批中</div><div class="c" style="left:444px">2024-03-23 19:08:03</div><div class="c" style="left:857px">-</div><div class="c lnk" style="left:986px">阿门</div><div class="c" style="left:1086.3px">9e2a88de-e90a-11ee-8d1a-a2b8e1f1c5d0</div></div>
<div class="row" style="top:375.36px;background:#fff"><div class="c" style="left:73px">简单测试</div><div class="c" style="left:236px">测试</div><div class="stag">审批中</div><div class="c" style="left:444px">2024-03-23 19:06:45</div><div class="c" style="left:857px">-</div><div class="c lnk" style="left:986px">阿门</div><div class="c" style="left:1089.9px">6f8528d3-e90a-11ee-8d1a-a2b8e1f1c5d0</div></div>
<div class="row" style="top:417.28px;background:#fff"><div class="c" style="left:73px">简单测试</div><div class="c" style="left:236px">测试</div><div class="stag">审批中</div><div class="c" style="left:444px">2024-03-23 19:05:34</div><div class="c" style="left:857px">-</div><div class="c lnk" style="left:986px">阿门</div><div class="c" style="left:1089.2px">45c1c897-e90a-11ee-8d1a-a2b8e1f1c5d0</div></div>
  <!-- horizontal scrollbar -->
  <div class="a" style="left:2px;top:451px;width:1171px;height:6px;background:#d4d6d9;border-radius:3px"></div>
  <!-- fixed right column -->
  <div class="a" style="left:1166px;top:0;width:10px;height:458px;background:linear-gradient(to right,rgba(0,0,0,0),rgba(0,0,0,0.06))"></div>
  <div class="a" id="fixed" style="left:1176px;top:0;width:181px;height:458px;background:#fff">
    <div class="a" style="left:0;top:0;width:181px;height:40px;border-bottom:1px solid #ebeef5"></div>
    <div class="th" style="left:77px">操作</div>
    <div class="a" style="left:0;top:40.00px;width:181px;height:41.92px;border-bottom:1px solid #ebeef5;background:#f5f7fa"><div class="c lnk" style="left:54px">详情</div><div class="c lnk" style="left:100px">取消</div></div>
<div class="a" style="left:0;top:81.92px;width:181px;height:41.92px;border-bottom:1px solid #ebeef5;background:#fff"><div class="c lnk" style="left:54px">详情</div><div class="c lnk" style="left:100px">取消</div></div>
<div class="a" style="left:0;top:123.84px;width:181px;height:41.92px;border-bottom:1px solid #ebeef5;background:#fff"><div class="c lnk" style="left:54px">详情</div><div class="c lnk" style="left:100px">取消</div></div>
<div class="a" style="left:0;top:165.76px;width:181px;height:41.92px;border-bottom:1px solid #ebeef5;background:#fff"><div class="c lnk" style="left:54px">详情</div><div class="c lnk" style="left:100px">取消</div></div>
<div class="a" style="left:0;top:207.68px;width:181px;height:41.92px;border-bottom:1px solid #ebeef5;background:#fff"><div class="c lnk" style="left:54px">详情</div><div class="c lnk" style="left:100px">取消</div></div>
<div class="a" style="left:0;top:249.60px;width:181px;height:41.92px;border-bottom:1px solid #ebeef5;background:#fff"><div class="c lnk" style="left:54px">详情</div><div class="c lnk" style="left:100px">取消</div></div>
<div class="a" style="left:0;top:291.52px;width:181px;height:41.92px;border-bottom:1px solid #ebeef5;background:#fff"><div class="c lnk" style="left:54px">详情</div><div class="c lnk" style="left:100px">取消</div></div>
<div class="a" style="left:0;top:333.44px;width:181px;height:41.92px;border-bottom:1px solid #ebeef5;background:#fff"><div class="c lnk" style="left:54px">详情</div><div class="c lnk" style="left:100px">取消</div></div>
<div class="a" style="left:0;top:375.36px;width:181px;height:41.92px;border-bottom:1px solid #ebeef5;background:#fff"><div class="c lnk" style="left:54px">详情</div><div class="c lnk" style="left:100px">取消</div></div>
<div class="a" style="left:0;top:417.28px;width:181px;height:41.92px;border-bottom:1px solid #ebeef5;background:#fff"><div class="c lnk" style="left:54px">详情</div><div class="c lnk" style="left:100px">取消</div></div>
  </div>
</div>

<!-- pagination -->
<div class="a" style="left:851px;top:876px;font-size:14px;color:#606266;line-height:18px;white-space:nowrap">共 163 条</div>
<div class="inp" style="left:926px;top:869px;width:128px;color:#606266"><span class="a" style="left:12px;top:0">10条/页</span><svg class="a" style="left:103px;top:12px" width="11" height="7" viewBox="0 0 11 7"><path d="M0.7 0.7l4.8 4.8 4.8-4.8" stroke="#a8abb2" stroke-width="1.1" fill="none"/></svg></div>
<div class="pg" style="left:1070px"><svg class="a" style="left:12px;top:11px" width="7" height="11" viewBox="0 0 7 11"><path d="M6 0.7L1.2 5.5 6 10.3" stroke="#c0c4cc" stroke-width="1.1" fill="none"/></svg></div>
<div class="pg" style="left:1110px;background:#409eff;color:#fff">1</div>
<div class="pg" style="left:1150px">2</div>
<div class="pg" style="left:1190px">3</div>
<div class="pg" style="left:1230px">4</div>
<div class="pg" style="left:1270px">5</div>
<div class="pg" style="left:1310px">6</div>
<div class="pg" style="left:1350px"><svg class="a" style="left:9px;top:14px" width="14" height="4" viewBox="0 0 14 4"><circle cx="2" cy="2" r="1.5" fill="#303133"/><circle cx="7" cy="2" r="1.5" fill="#303133"/><circle cx="12" cy="2" r="1.5" fill="#303133"/></svg></div>
<div class="pg" style="left:1390px">17</div>
<div class="pg" style="left:1430px"><svg class="a" style="left:13px;top:11px" width="7" height="11" viewBox="0 0 7 11"><path d="M1 0.7l4.8 4.8L1 10.3" stroke="#303133" stroke-width="1.1" fill="none"/></svg></div>
<div class="a" style="left:1482px;top:876px;font-size:14px;color:#606266;line-height:18px;white-space:nowrap">前往</div>
<div class="inp" style="left:1518px;top:869px;width:56px;color:#606266;text-align:center">1</div>
<div class="a" style="left:1582px;top:876px;font-size:14px;color:#606266;line-height:18px;white-space:nowrap">页</div>

<!-- floating settings -->
<div class="a" style="left:1637px;top:527px;width:39px;height:40px;background:#409eff;border-radius:6px 0 0 6px"></div>
<svg class="a" style="left:1649px;top:537px" width="15" height="15" viewBox="0 0 24 24"><path d="M12 2l2 1 .6 2.3 2.2 1 2.1-1.1 1.9 1.9-1.1 2.1 1 2.2 2.3.6v2.8l-2.3.6-1 2.2 1.1 2.1-1.9 1.9-2.1-1.1-2.2 1-.6 2.3H10.6l-.6-2.3-2.2-1-2.1 1.1-1.9-1.9 1.1-2.1-1-2.2L1.6 13.4V10.6l2.3-.6 1-2.2L3.8 5.7l1.9-1.9 2.1 1.1 2.2-1L10.6 1.6z" stroke="#fff" stroke-width="1.8" fill="none" stroke-linejoin="round"/><circle cx="12" cy="12" r="3.2" stroke="#fff" stroke-width="1.8" fill="none"/></svg>

<div class="a" style="left:283px;top:441px;width:1291px;height:41px;border:3px solid #f83c75"></div>


</body></html>
